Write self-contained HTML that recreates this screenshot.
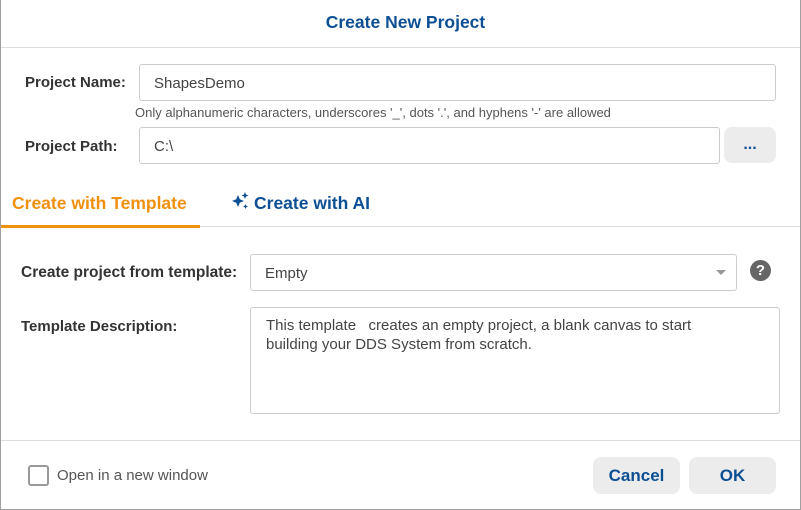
<!DOCTYPE html>
<html><head><style>
*{box-sizing:border-box;margin:0;padding:0}
body{width:801px;height:510px;background:#fff;font-family:"Liberation Sans",sans-serif;position:relative;overflow:hidden;color:#333}
.frame{position:absolute;left:0;top:0;width:801px;height:510px;border:1px solid #a0a0a0;border-top:none}
.abs{position:absolute}
.title{left:5px;width:801px;top:12px;text-align:center;font-size:17.5px;font-weight:bold;color:#0d4f94}
.line{height:1px;background:#dedede}
.lbl{font-size:15px;font-weight:bold;color:#333}
.inp{border:1px solid #ccc;border-radius:3px;background:#fff;font-size:15px;color:#444;padding-left:14px;padding-top:2px;line-height:33px}
.btn{background:#ececec;border-radius:8px;color:#0d4f94;font-weight:bold;font-size:17px;text-align:center}
</style></head><body>
<div class="frame"></div>
<div class="abs title">Create New Project</div>
<div class="abs line" style="left:1px;top:47px;width:799px"></div>
<div class="abs lbl" style="left:25px;top:74px">Project Name:</div>
<div class="abs inp" style="left:139px;top:64px;width:637px;height:37px">ShapesDemo</div>
<div class="abs" style="left:135px;top:105px;font-size:13px;color:#555">Only alphanumeric characters, underscores '_', dots '.', and hyphens '-' are allowed</div>
<div class="abs lbl" style="left:25px;top:138px">Project Path:</div>
<div class="abs inp" style="left:139px;top:127px;width:581px;height:37px">C:\</div>
<div class="abs btn" style="left:724px;top:127px;width:52px;height:36px;line-height:36px;font-size:16px">...</div>
<div class="abs" style="left:12px;top:193px;font-size:17.5px;font-weight:bold;color:#f0900f">Create with Template</div>
<div class="abs" style="left:1px;top:225px;width:199px;height:3px;background:#f0900f"></div>
<div class="abs line" style="left:200px;top:226px;width:600px"></div>
<svg class="abs" style="left:231px;top:192px" width="20" height="20" viewBox="0 0 20 20"><path d="M7 3 L8.8 7.2 13 9 8.8 10.8 7 15 5.2 10.8 1 9 5.2 7.2Z" fill="#0d4f94"/><path d="M14 0 L15 2.5 17.5 3.5 15 4.5 14 7 13 4.5 10.5 3.5 13 2.5Z" fill="#0d4f94"/><path d="M14.5 12 L15.3 13.7 17 14.5 15.3 15.3 14.5 17 13.7 15.3 12 14.5 13.7 13.7Z" fill="#0d4f94"/></svg>
<div class="abs" style="left:254px;top:193px;font-size:17.5px;font-weight:bold;color:#0d4f94">Create with AI</div>
<div class="abs lbl" style="left:21px;top:264px;font-size:15.5px">Create project from template:</div>
<div class="abs inp" style="left:250px;top:254px;width:487px;height:37px">Empty</div>
<div class="abs" style="left:716px;top:270px;border-left:5px solid transparent;border-right:5px solid transparent;border-top:5px solid #999"></div>
<div class="abs" style="left:750px;top:260px;width:21px;height:21px;border-radius:50%;background:#666;color:#fff;font-weight:bold;font-size:15px;text-align:center;line-height:21px">?</div>
<div class="abs lbl" style="left:21px;top:318px">Template Description:</div>
<div class="abs" style="left:250px;top:307px;width:530px;height:107px;border:1px solid #ccc;border-radius:3px;padding:8px 40px 8px 15px;font-size:15px;line-height:19px;color:#444">This template &nbsp; creates an empty project, a blank canvas to start building your DDS System from scratch.</div>
<div class="abs line" style="left:1px;top:440px;width:799px"></div>
<div class="abs" style="left:28px;top:465px;width:21px;height:21px;border:2px solid #999;border-radius:3px"></div>
<div class="abs" style="left:57px;top:467px;font-size:15px;color:#555">Open in a new window</div>
<div class="abs btn" style="left:593px;top:457px;width:87px;height:37px;line-height:37px">Cancel</div>
<div class="abs btn" style="left:689px;top:457px;width:87px;height:37px;line-height:37px">OK</div>
</body></html>
